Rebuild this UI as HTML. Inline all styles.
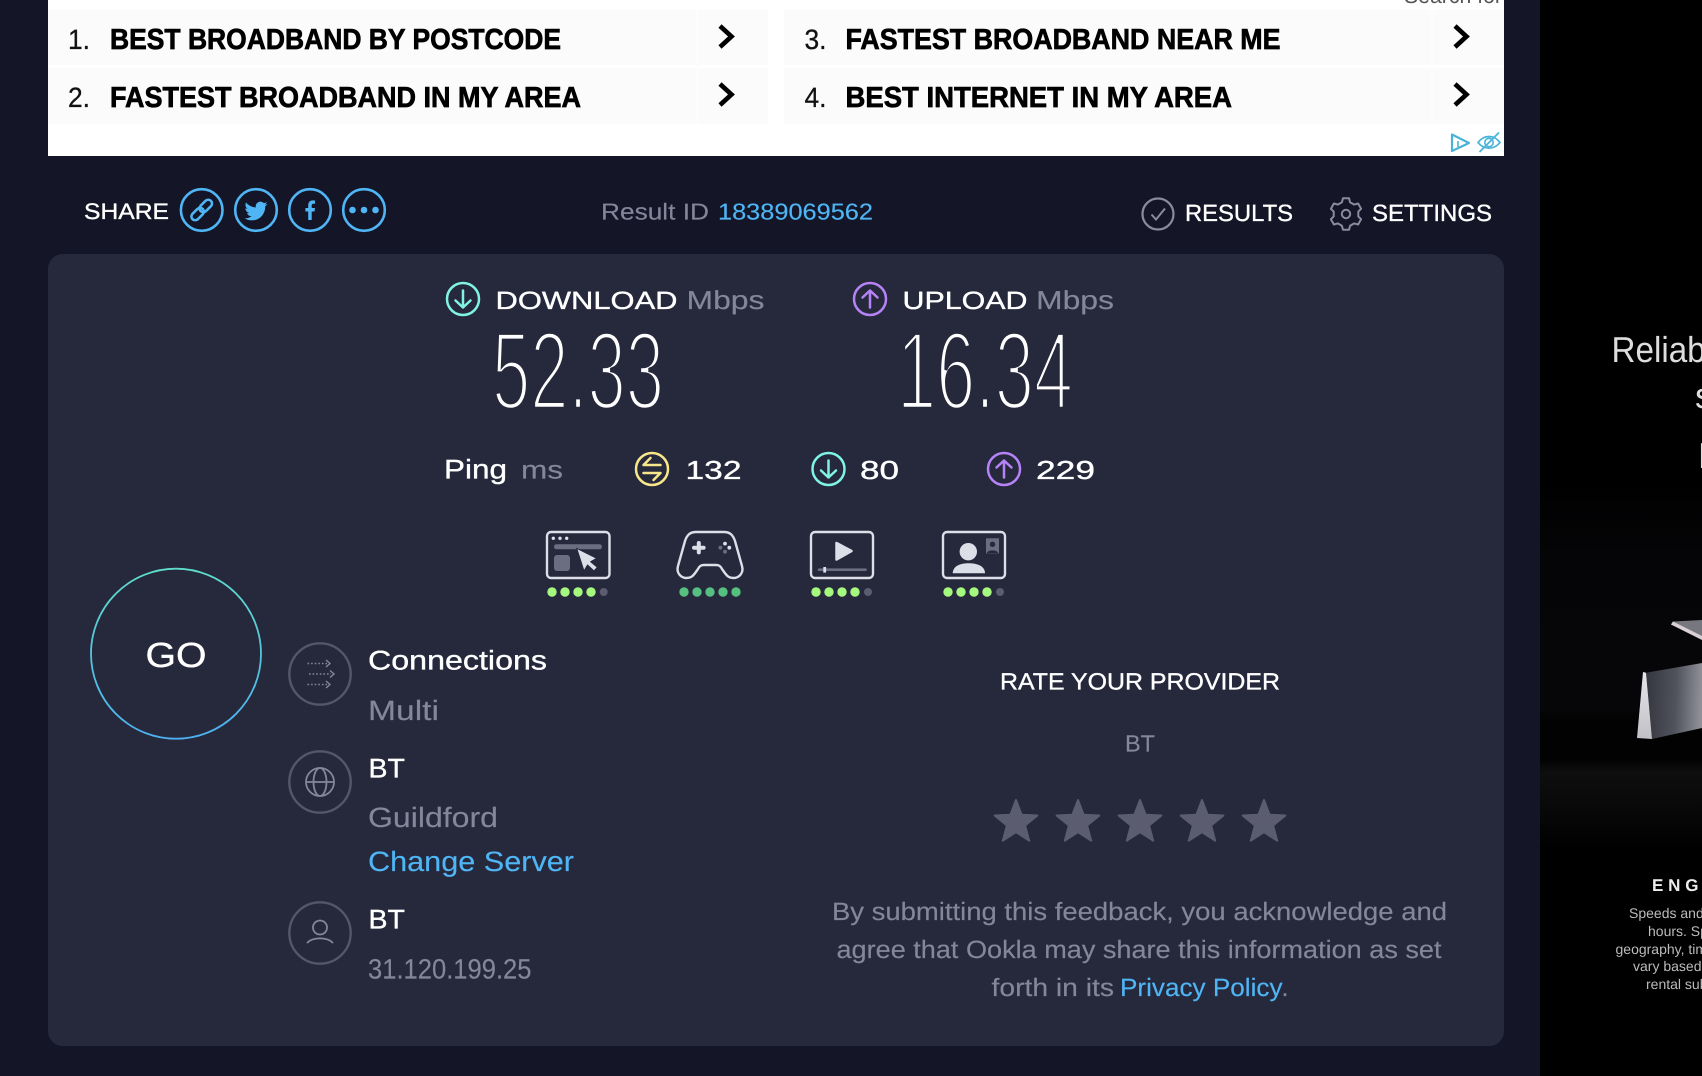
<!DOCTYPE html>
<html><head><meta charset="utf-8"><title>Speedtest result</title>
<style>
html,body{margin:0;padding:0;background:#141526;width:1702px;height:1076px;overflow:hidden}
svg{display:block;position:absolute;left:0;top:0}
text{font-family:"Liberation Sans",sans-serif;text-rendering:geometricPrecision;white-space:pre}
.w{fill:#fff;stroke:#fff;stroke-width:.35px}.g{fill:#858699;stroke:#858699;stroke-width:.15px}.b{fill:#4fb5f5;stroke:#4fb5f5;stroke-width:.15px}
.ad{font-size:29px;font-weight:700;fill:#000;stroke:#000;stroke-width:.7px}
.adn{font-size:28px;fill:#111;stroke:#111;stroke-width:.3px}
.num{font-size:111px;fill:#fff;stroke:#26283c;stroke-width:4.6px}
.ic{fill:none;stroke:#dcdfe8;stroke-width:2.4}
</style></head>
<body>
<svg width="1702" height="1076" viewBox="0 0 1702 1076" xmlns="http://www.w3.org/2000/svg">
<defs>
<linearGradient id="go" x1="0" y1="0" x2="0" y2="1"><stop offset="0" stop-color="#5fdccb"/><stop offset="1" stop-color="#4cafef"/></linearGradient>
<linearGradient id="wedge" x1="0" y1="0" x2="1" y2="0.05"><stop offset="0" stop-color="#34353f"/><stop offset=".55" stop-color="#50525c"/><stop offset="1" stop-color="#8e8f97"/></linearGradient>
<linearGradient id="wedgeV" x1="0" y1="0" x2="0" y2="1"><stop offset="0" stop-color="#e6e6ea"/><stop offset="1" stop-color="#c0c0c6"/></linearGradient>
<linearGradient id="bgv" x1="0" y1="0" x2="0" y2="1">
<stop offset="0" stop-color="#000"/>
<stop offset=".2" stop-color="#050507"/>
<stop offset=".62" stop-color="#060608"/>
<stop offset=".66" stop-color="#020202"/>
<stop offset=".755" stop-color="#020202"/>
<stop offset=".79" stop-color="#0e0e0e"/>
<stop offset=".88" stop-color="#090909"/>
<stop offset="1" stop-color="#000"/>
</linearGradient>
<path id="star" d="M0 -22.5 L5.6 -7.8 L21.4 -7 L9.1 3 L13.2 18.2 L0 9.6 L-13.2 18.2 L-9.1 3 L-21.4 -7 L-5.6 -7.8 Z" fill="#5b5c70" stroke="#5b5c70" stroke-width="2" stroke-linejoin="round"/>
</defs>

<rect width="1702" height="1076" fill="#141526"/>

<!-- Ad -->
<rect x="48" y="0" width="1456" height="156" fill="#fff"/>
<rect x="48" y="10" width="720" height="55" fill="#fbfbfb"/>
<rect x="48" y="68" width="720" height="56" fill="#fbfbfb"/>
<rect x="784" y="10" width="720" height="55" fill="#fbfbfb"/>
<rect x="784" y="68" width="720" height="56" fill="#fbfbfb"/>
<rect x="696" y="10" width="2" height="114" fill="#fdfdfd"/>
<rect x="1431" y="10" width="2" height="114" fill="#fdfdfd"/>
<text x="1404" y="3" font-size="22" fill="#555" textLength="98" lengthAdjust="spacingAndGlyphs">Search for</text>

<text class="adn" x="68" y="49" textLength="22" lengthAdjust="spacingAndGlyphs">1.</text>
<text class="ad" x="110" y="49" textLength="451" lengthAdjust="spacingAndGlyphs">BEST BROADBAND BY POSTCODE</text>
<text class="adn" x="68" y="107" textLength="22" lengthAdjust="spacingAndGlyphs">2.</text>
<text class="ad" x="110" y="107" textLength="471" lengthAdjust="spacingAndGlyphs">FASTEST BROADBAND IN MY AREA</text>
<text class="adn" x="804.5" y="49" textLength="22" lengthAdjust="spacingAndGlyphs">3.</text>
<text class="ad" x="845.5" y="49" textLength="435" lengthAdjust="spacingAndGlyphs">FASTEST BROADBAND NEAR ME</text>
<text class="adn" x="804.5" y="107" textLength="22" lengthAdjust="spacingAndGlyphs">4.</text>
<text class="ad" x="845.5" y="107" textLength="386.5" lengthAdjust="spacingAndGlyphs">BEST INTERNET IN MY AREA</text>
<g fill="none" stroke="#000" stroke-width="4.6" stroke-linejoin="miter">
<path d="M720 26 L731.5 36.5 L720 47"/>
<path d="M720 84 L731.5 94.5 L720 105"/>
<path d="M1455 26 L1466.5 36.5 L1455 47"/>
<path d="M1455 84 L1466.5 94.5 L1455 105"/>
</g>
<g fill="none" stroke="#4ab4d8" stroke-width="2.2" stroke-linejoin="round">
<path d="M1452 134.5 L1469 143 L1452 151 Z"/>
<path d="M1458 141 V147" stroke-width="1.6"/>
<path d="M1478 142.5 C1484 134.5 1494 134.5 1500 142.5 C1494 150 1484 150 1478 142.5 Z" stroke-width="1.8"/>
<circle cx="1489" cy="142.5" r="4.2" stroke-width="1.6"/>
<path d="M1499 132.5 L1479.5 152" stroke-width="1.8"/>
</g>

<!-- Share row -->
<text class="w" x="84" y="219" font-size="22.5" textLength="85" lengthAdjust="spacingAndGlyphs">SHARE</text>
<g fill="none" stroke="#4fb5f5" stroke-width="2.6">
<circle cx="201.7" cy="210" r="20.8"/><circle cx="256" cy="210" r="20.8"/><circle cx="310" cy="210" r="20.8"/><circle cx="364" cy="210" r="20.8"/>
<g transform="translate(201.7 210) rotate(-45)" stroke-width="2.5">
<rect x="-13" y="-3.8" width="14.5" height="7.6" rx="3.8"/>
<rect x="-1.5" y="-3.8" width="14.5" height="7.6" rx="3.8"/>
</g>
</g>
<path transform="translate(244.5 199.5) scale(.96)" fill="#4fb5f5" d="M23.953 4.57a10 10 0 01-2.825.775 4.958 4.958 0 002.163-2.723c-.951.555-2.005.959-3.127 1.184a4.92 4.92 0 00-8.384 4.482C7.69 8.095 4.067 6.13 1.64 3.162a4.822 4.822 0 00-.666 2.475c0 1.71.87 3.213 2.188 4.096a4.904 4.904 0 01-2.228-.616v.06a4.923 4.923 0 003.946 4.827 4.996 4.996 0 01-2.212.085 4.936 4.936 0 004.604 3.417 9.867 9.867 0 01-6.102 2.105c-.39 0-.779-.023-1.17-.067a13.995 13.995 0 007.557 2.209c9.053 0 13.998-7.496 13.998-13.985 0-.21 0-.42-.015-.63A9.935 9.935 0 0024 4.59z"/>
<path fill="#4fb5f5" d="M308.2 220 V211.5 H305.4 V208 H308.2 V205.4 C308.2 202.1 310 200.4 312.7 200.4 C313.9 200.4 314.8 200.5 315 200.6 V203.7 H313.4 C312 203.7 311.7 204.4 311.7 205.5 V208 H315 L314.5 211.5 H311.7 V220 Z"/>
<g fill="#4fb5f5"><circle cx="352.5" cy="210" r="3.3"/><circle cx="364" cy="210" r="3.3"/><circle cx="375.5" cy="210" r="3.3"/></g>

<text class="g" x="601" y="219.5" font-size="23" textLength="108" lengthAdjust="spacingAndGlyphs">Result ID</text>
<text class="b" x="718" y="219.5" font-size="23" textLength="155" lengthAdjust="spacingAndGlyphs">18389069562</text>

<circle cx="1158" cy="214" r="15.5" fill="none" stroke="#8a8b9d" stroke-width="2.2"/>
<path d="M1151.5 214.5 L1156 219.5 L1165 208.5" fill="none" stroke="#8a8b9d" stroke-width="2"/>
<text class="w" x="1185" y="221" font-size="23.5" textLength="108" lengthAdjust="spacingAndGlyphs">RESULTS</text>
<g transform="translate(1346 214)" fill="none" stroke="#8a8b9d" stroke-width="2" stroke-linejoin="round">
<path d="M-3.05,-15.7 L3.05,-15.7 L4.07,-11.8 L8.2,-9.4 L12.1,-10.5 L15.1,-5.2 L12.3,-2.4 L12.3,2.4 L15.1,5.2 L12.1,10.5 L8.2,9.4 L4.07,11.8 L3.05,15.7 L-3.05,15.7 L-4.07,11.8 L-8.2,9.4 L-12.1,10.5 L-15.1,5.2 L-12.3,2.4 L-12.3,-2.4 L-15.1,-5.2 L-12.1,-10.5 L-8.2,-9.4 L-4.07,-11.8 Z"/>
<circle r="4.2"/>
</g>
<text class="w" x="1372" y="221" font-size="23.5" textLength="120" lengthAdjust="spacingAndGlyphs">SETTINGS</text>

<!-- Panel -->
<rect x="48" y="254" width="1456" height="792" rx="15" fill="#26283c"/>

<!-- Download / Upload -->
<g fill="none" stroke-width="2.5" stroke-linecap="round" stroke-linejoin="round">
<circle cx="463" cy="299" r="16" stroke="#7ff3e4"/>
<path d="M463 290.5 V307.5 M455.5 300.5 L463 307.5 L470.5 300.5" stroke="#7ff3e4"/>
<circle cx="870" cy="299" r="16" stroke="#b583f5"/>
<path d="M870 307.5 V290.5 M862.5 297.5 L870 290.5 L877.5 297.5" stroke="#b583f5"/>
<circle cx="652" cy="469" r="16" stroke="#f7e78a"/>
<path d="M660.5 465 H643.5 L650.5 458 M643.5 473 H660.5 L653.5 480" stroke="#f7e78a"/>
<circle cx="828.5" cy="469" r="16" stroke="#7ff3e4"/>
<path d="M828.5 460.5 V477.5 M821 470.5 L828.5 477.5 L836 470.5" stroke="#7ff3e4"/>
<circle cx="1004" cy="469" r="16" stroke="#b583f5"/>
<path d="M1004 477.5 V460.5 M996.5 467.5 L1004 460.5 L1011.5 467.5" stroke="#b583f5"/>
</g>
<text class="w" x="495.5" y="309" font-size="25" textLength="182" lengthAdjust="spacingAndGlyphs">DOWNLOAD</text>
<text class="g" x="686.5" y="309" font-size="26" textLength="78" lengthAdjust="spacingAndGlyphs">Mbps</text>
<text class="w" x="902.5" y="309" font-size="25" textLength="125" lengthAdjust="spacingAndGlyphs">UPLOAD</text>
<text class="g" x="1036" y="309" font-size="26" textLength="78" lengthAdjust="spacingAndGlyphs">Mbps</text>
<text class="num" x="492" y="409" textLength="172" lengthAdjust="spacingAndGlyphs">52.33</text>
<text class="num" x="897" y="409" textLength="176" lengthAdjust="spacingAndGlyphs">16.34</text>

<text class="w" x="444" y="478.5" font-size="27" textLength="63" lengthAdjust="spacingAndGlyphs">Ping</text>
<text class="g" x="521" y="478.5" font-size="25.5" textLength="42" lengthAdjust="spacingAndGlyphs">ms</text>
<text class="w" x="685.5" y="479" font-size="26" textLength="56" lengthAdjust="spacingAndGlyphs">132</text>
<text class="w" x="860" y="479" font-size="26" textLength="39" lengthAdjust="spacingAndGlyphs">80</text>
<text class="w" x="1036" y="479" font-size="26" textLength="59" lengthAdjust="spacingAndGlyphs">229</text>

<!-- Rating icons -->
<rect class="ic" x="547" y="532" width="62.5" height="46" rx="4"/>
<g fill="#dcdfe8"><circle cx="553.3" cy="538.3" r="1.7"/><circle cx="560" cy="538.3" r="1.7"/><circle cx="566.7" cy="538.3" r="1.7"/></g>
<rect x="554" y="544.3" width="48" height="5" rx="2.5" fill="#6c6d80"/>
<rect x="554" y="555" width="16" height="16" rx="3" fill="#6c6d80"/>
<path d="M576.7 548.3 L584 571 L587.5 565 L594 571 L597.3 567.3 L590.7 561.7 L596.7 558.3 Z" fill="#dcdfe8" stroke="#26283c" stroke-width="1" stroke-linejoin="round"/>

<path class="ic" d="M696 532 H724 C730 532 733 535 735 541 L742 566 C744 573 739 578 733.5 578 C729 578 727 576 724.5 572.5 L722 569 C720.5 566 719 565 716 565 H704 C701 565 699.5 566 698 569 L695.5 572.5 C693 576 691 578 686.5 578 C681 578 676 573 678 566 L685 541 C687 535 690 532 696 532 Z"/>
<path d="M698.8 543 V552.4 M694 547.7 H703.6" stroke="#dcdfe8" stroke-width="4" stroke-linecap="round"/>
<circle cx="725" cy="543.6" r="1.9" fill="#dcdfe8"/><circle cx="729.3" cy="547.7" r="1.9" fill="#dcdfe8"/>
<circle cx="720.4" cy="547.7" r="1.9" fill="#6c6d80"/><circle cx="725" cy="551.7" r="1.9" fill="#6c6d80"/>

<rect class="ic" x="811" y="532" width="62" height="46" rx="4"/>
<path d="M836.5 543 V559.5 L851.5 551 Z" fill="#dcdfe8" stroke="#dcdfe8" stroke-width="2.5" stroke-linejoin="round"/>
<path d="M819 569.7 H865.5" stroke="#6c6d80" stroke-width="2.6" stroke-linecap="round"/>
<rect x="823.3" y="567" width="2.8" height="5.6" fill="#dcdfe8"/>

<rect class="ic" x="943" y="532" width="62" height="46" rx="4"/>
<circle cx="968.3" cy="551.7" r="8.7" fill="#dcdfe8"/>
<path d="M952.7 573.3 C953 566 960 563.3 968.8 563.3 C977 563.3 985 566 985 573.3 Z" fill="#dcdfe8"/>
<rect x="986" y="538.3" width="13" height="15" fill="#6c6d80"/>
<circle cx="992.5" cy="544.3" r="2.7" fill="#26283c"/>
<path d="M987 553 C987.5 549.5 997.5 549.5 998 553 Z" fill="#26283c"/>

<g fill="#a6f97f"><circle cx="552" cy="592" r="4.7"/><circle cx="565" cy="592" r="4.7"/><circle cx="578" cy="592" r="4.7"/><circle cx="591" cy="592" r="4.7"/></g>
<circle cx="603.7" cy="592" r="4" fill="#5b5c70"/>
<g fill="#55c07f"><circle cx="684" cy="592" r="4.7"/><circle cx="697" cy="592" r="4.7"/><circle cx="710" cy="592" r="4.7"/><circle cx="723" cy="592" r="4.7"/><circle cx="736" cy="592" r="4.7"/></g>
<g fill="#a6f97f"><circle cx="816" cy="592" r="4.7"/><circle cx="829" cy="592" r="4.7"/><circle cx="842" cy="592" r="4.7"/><circle cx="855" cy="592" r="4.7"/></g>
<circle cx="868" cy="592" r="4" fill="#5b5c70"/>
<g fill="#a6f97f"><circle cx="948" cy="592" r="4.7"/><circle cx="961" cy="592" r="4.7"/><circle cx="974" cy="592" r="4.7"/><circle cx="987" cy="592" r="4.7"/></g>
<circle cx="1000" cy="592" r="4" fill="#5b5c70"/>

<!-- GO -->
<circle cx="176" cy="653.7" r="85" fill="none" stroke="url(#go)" stroke-width="1.8"/>
<text class="w" x="145.5" y="667" font-size="35" textLength="61" lengthAdjust="spacingAndGlyphs">GO</text>

<!-- Info circles -->
<g fill="none" stroke="#55566a" stroke-width="2.4">
<circle cx="320" cy="674" r="30.7"/><circle cx="320" cy="782" r="30.7"/><circle cx="320" cy="933" r="30.7"/>
</g>
<g fill="none" stroke="#85869a" stroke-width="1.4">
<path d="M307.5 663.5 H327" stroke-dasharray="1.6 2"/><path d="M326 660 L330 663.5 L326 667" />
<path d="M309 674 H331" stroke-dasharray="1.6 2"/><path d="M330 670.5 L334 674 L330 677.5"/>
<path d="M307.5 684.5 H327" stroke-dasharray="1.6 2"/><path d="M326 681 L330 684.5 L326 688"/>
</g>
<g fill="none" stroke="#85869a" stroke-width="1.8">
<circle cx="320" cy="782" r="14"/><ellipse cx="320" cy="782" rx="6.5" ry="14"/><path d="M306.5 782 H333.5"/>
<circle cx="320" cy="927.5" r="7"/><path d="M307.5 942.5 C313 937 327 937 332.5 942.5" stroke-linecap="round"/>
</g>

<text class="w" x="368" y="669.5" font-size="27" textLength="179" lengthAdjust="spacingAndGlyphs">Connections</text>
<text class="g" x="368" y="720" font-size="28" textLength="71" lengthAdjust="spacingAndGlyphs">Multi</text>
<text class="w" x="368.5" y="777.5" font-size="27" textLength="36.5" lengthAdjust="spacingAndGlyphs">BT</text>
<text class="g" x="368" y="827" font-size="28" textLength="130" lengthAdjust="spacingAndGlyphs">Guildford</text>
<text class="b" x="368" y="871" font-size="28" textLength="206" lengthAdjust="spacingAndGlyphs">Change Server</text>
<text class="w" x="368.5" y="928.5" font-size="27" textLength="36.5" lengthAdjust="spacingAndGlyphs">BT</text>
<text class="g" x="368" y="978.5" font-size="28" textLength="163.5" lengthAdjust="spacingAndGlyphs">31.120.199.25</text>

<!-- Rate provider -->
<text class="w" x="1000" y="689.5" font-size="23.5" textLength="280" lengthAdjust="spacingAndGlyphs">RATE YOUR PROVIDER</text>
<text class="g" x="1125" y="751.5" font-size="23.5" textLength="30" lengthAdjust="spacingAndGlyphs">BT</text>
<use href="#star" x="1016" y="822.5"/><use href="#star" x="1078" y="822.5"/><use href="#star" x="1140" y="822.5"/><use href="#star" x="1202" y="822.5"/><use href="#star" x="1264" y="822.5"/>
<text class="g" x="832" y="920" font-size="25" textLength="615" lengthAdjust="spacingAndGlyphs">By submitting this feedback, you acknowledge and</text>
<text class="g" x="836.5" y="958" font-size="25" textLength="605" lengthAdjust="spacingAndGlyphs">agree that Ookla may share this information as set</text>
<text class="g" x="991.5" y="996" font-size="25" textLength="122.5" lengthAdjust="spacingAndGlyphs">forth in its</text>
<text class="b" x="1120" y="996" font-size="25" textLength="162.5" lengthAdjust="spacingAndGlyphs">Privacy Policy</text>
<text class="g" x="1281.5" y="996" font-size="25">.</text>

<!-- Right ad -->
<rect x="1540" y="0" width="162" height="1076" fill="#000"/>
<rect x="1540" y="480" width="162" height="370" fill="url(#bgv)"/>
<path d="M1671 624.5 L1673 621.5 L1702 620 V638 Z" fill="#77777f"/>
<path d="M1671 624.5 L1702 640 V636 L1673 621.5 Z" fill="#d8d0d4"/>
<path d="M1646 672.7 L1702 663 V728 L1652 739 Z" fill="url(#wedge)"/>
<path d="M1637 738 L1643 672 L1646 672.7 L1652 739 Z" fill="url(#wedgeV)"/>
<text x="1611.5" y="362" font-size="36" fill="#ddd" textLength="120" lengthAdjust="spacingAndGlyphs">Reliable</text>
<text x="1695" y="408" font-size="36" fill="#ddd">s</text>
<text x="1698" y="468" font-size="36" fill="#ddd">N</text>
<text x="1652" y="891" font-size="17" font-weight="700" fill="#eee" letter-spacing="4.8">ENGINEERED</text>
<g font-size="14" fill="#bbb">
<text x="1629" y="918">Speeds and more</text>
<text x="1648" y="936">hours. Speed</text>
<text x="1615.5" y="954">geography, time</text>
<text x="1633" y="971">vary based on</text>
<text x="1646" y="989">rental subject</text>
</g>
</svg>
</body></html>
